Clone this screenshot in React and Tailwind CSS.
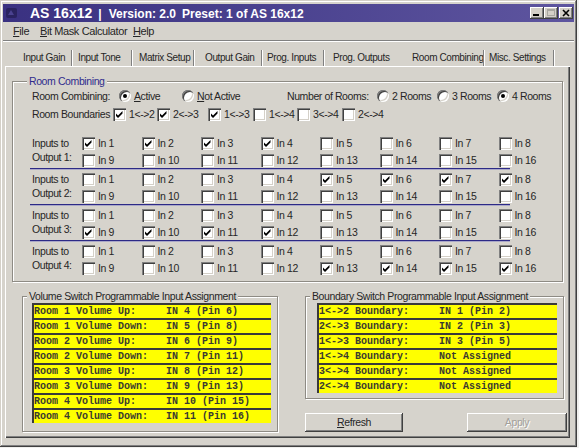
import React from 'react';

const UI_FONT = "font-['Liberation_Sans',Arial,sans-serif]";

function Check({ on }) {
  return (
    <span className="relative inline-block w-[13px] h-[13px] shrink-0 bg-white shadow-[inset_1px_1px_0_#808080,inset_2px_2px_0_#404040,inset_-1px_-1px_0_#ffffff,inset_-2px_-2px_0_#d4d0c8]">
      {on && (
        <svg width="13" height="13" viewBox="0 0 13 13" className="absolute left-0 top-0">
          <path d="M3 5.5 L5 7.5 L9.5 3 V5.5 L5 10 L3 8 Z" fill="#000" />
        </svg>
      )}
    </span>
  );
}

function Radio({ on }) {
  return (
    <span className="inline-flex items-center justify-center w-[12px] h-[12px] shrink-0 rounded-full bg-white shadow-[inset_1px_1px_0_#808080,inset_2px_2px_0_#404040,inset_-1px_-1px_0_#ffffff,inset_-2px_-2px_0_#d4d0c8]">
      {on && <span className="w-[4px] h-[4px] rounded-full bg-black" />}
    </span>
  );
}

function CheckItem({ on, children, className = '' }) {
  return (
    <div className={`flex items-center gap-[3px] ${className}`}>
      <Check on={on} />
      <span>{children}</span>
    </div>
  );
}

function RadioItem({ on, children, className = '' }) {
  return (
    <div className={`flex items-center gap-[3px] ${className}`}>
      <Radio on={on} />
      <span>{children}</span>
    </div>
  );
}

function Group({ title, className = '', titleClass = '', children }) {
  return (
    <div className={`relative border border-[#8e8b84] shadow-[inset_1px_1px_0_#ffffff,1px_1px_0_#ffffff] ${className}`}>
      <span className={`absolute left-[4px] -top-[7px] px-[2px] bg-[#d6d3cc] leading-[12px] ${titleClass}`}>
        {title}
      </span>
      {children}
    </div>
  );
}

function U({ children }) {
  return <span className="underline underline-offset-[1px]">{children}</span>;
}

const tabs = [
  { label: 'Input Gain', w: 'w-[48px]', gap: 'w-[5px]' },
  { label: 'Input Tone', w: 'w-[53px]', gap: 'w-[6px]' },
  { label: 'Matrix Setup', w: 'w-[54px]', gap: 'w-[10px]' },
  { label: 'Output Gain', w: 'w-[56px]', gap: 'w-[4px]' },
  { label: 'Prog. Inputs', w: 'w-[56px]', gap: 'w-[8px]' },
  { label: 'Prog. Outputs', w: 'w-[79px]', gap: null },
  { label: 'Room Combining', w: 'w-[71px]', gap: 'w-[4px]' },
  { label: 'Misc. Settings', w: 'w-[64px]', gap: 'w-0' },
];

const outputs = [
  { n: 1, on: [1, 2, 3, 4] },
  { n: 2, on: [5, 6, 7, 8] },
  { n: 3, on: [9, 10, 11, 12] },
  { n: 4, on: [13, 14, 15, 16] },
];

const volumeRows = [
  'Room 1 Volume Up:     IN 4 (Pin 6)',
  'Room 1 Volume Down:   IN 5 (Pin 8)',
  'Room 2 Volume Up:     IN 6 (Pin 9)',
  'Room 2 Volume Down:   IN 7 (Pin 11)',
  'Room 3 Volume Up:     IN 8 (Pin 12)',
  'Room 3 Volume Down:   IN 9 (Pin 13)',
  'Room 4 Volume Up:     IN 10 (Pin 15)',
  'Room 4 Volume Down:   IN 11 (Pin 16)',
];

const boundaryRows = [
  '1<->2 Boundary:     IN 1 (Pin 2)',
  '2<->3 Boundary:     IN 2 (Pin 3)',
  '1<->3 Boundary:     IN 3 (Pin 5)',
  '1<->4 Boundary:     Not Assigned',
  '3<->4 Boundary:     Not Assigned',
  '2<->4 Boundary:     Not Assigned',
];

function YellowRow({ text }) {
  return (
    <div className="h-[15px] bg-[#ffff00] border-t-2 border-l-2 border-[#3a3a3a] flex items-center font-['Liberation_Mono','Courier_New',monospace] text-[10px] tracking-normal font-bold text-[#3a3a30] whitespace-pre leading-[13px]">
      {text}
    </div>
  );
}

function TitleButton({ children, className = '' }) {
  return (
    <div className={`w-[14px] h-[12px] bg-[#d4d0c8] relative shadow-[inset_-1px_-1px_0_#404040,inset_1px_1px_0_#ffffff,inset_-2px_-2px_0_#808080] ${className}`}>
      {children}
    </div>
  );
}

function TitleBar() {
  return (
    <div className="mt-[1px] h-[18px] shrink-0 flex items-center bg-linear-to-r from-[#3a3181] to-[#5e559f] pl-[2px] pr-[1px]">
      <svg width="14" height="14" viewBox="0 0 14 14" className="shrink-0">
        <rect x="1" y="2" width="11" height="10" rx="2" fill="#2a2360" />
        <path d="M3 9 L6 4 L9 9 Z" fill="#4b4290" />
      </svg>
      <div className="ml-[11px] flex items-baseline text-white font-bold tracking-normal">
        <span className="text-[14px]">AS 16x12</span>
        <span className="text-[12px] ml-[6px]">|</span>
        <span className="text-[12px] ml-[7px]">Version: 2.0</span>
        <span className="text-[12px] ml-[6px]">Preset: 1 of AS 16x12</span>
      </div>
      <div className="ml-auto flex items-center">
        <TitleButton>
          <span className="absolute left-[3px] top-[7px] w-[6px] h-[2px] bg-black" />
        </TitleButton>
        <TitleButton>
          <span className="absolute left-[3px] top-[2px] w-[8px] h-[7px] border border-t-2 border-[#a8a6a0]" />
        </TitleButton>
        <TitleButton className="ml-[1px]">
          <svg width="14" height="12" viewBox="0 0 14 12" className="absolute left-0 top-0">
            <path d="M4 3 L10 9 M10 3 L4 9" stroke="#000" strokeWidth="1.6" />
          </svg>
        </TitleButton>
      </div>
    </div>
  );
}

function MenuBar() {
  return (
    <div className="h-[18px] shrink-0 flex items-center pl-[10px] text-[11px]">
      <span className="w-[27px]"><U>F</U>ile</span>
      <span className="w-[93px]"><U>B</U>it Mask Calculator</span>
      <span><U>H</U>elp</span>
    </div>
  );
}

function TabStrip() {
  return (
    <div className="mt-[8px] ml-[20px] h-[16px] shrink-0 flex items-stretch text-[10px]">
      {tabs.map((t) => (
        <React.Fragment key={t.label}>
          <div className={`${t.w} shrink-0 flex items-center`}>{t.label}</div>
          {t.gap !== null && (
            <>
              <div className="w-[2px] shrink-0 border-l border-[#808080] border-r border-r-white" />
              <div className={`${t.gap} shrink-0`} />
            </>
          )}
        </React.Fragment>
      ))}
    </div>
  );
}

function OutputBlock({ n, on, last }) {
  const cells = Array.from({ length: 16 }, (_, i) => i + 1);
  return (
    <div>
      <div className="flex">
        <div className="w-[50px] pt-[1px] leading-[14px]">
          Inputs to
          <br />
          Output {n}:
        </div>
        <div className="grid grid-cols-[repeat(8,59.5px)] grid-rows-[17px_16px]">
          {cells.map((c) => (
            <CheckItem key={c} on={on.includes(c)}>
              In {c}
            </CheckItem>
          ))}
        </div>
      </div>
      {!last && <div className="-ml-[2px] w-[480px] h-[2px] mb-[1px] border-t border-[#2d2a86] border-b border-b-[#aaa8c8]" />}
    </div>
  );
}

function RoomCombining() {
  return (
    <Group
      title="Room Combining"
      titleClass="left-[14px] text-[#2f2b8c]"
      className="ml-[5px] mt-[13px] w-[551px] pl-[19px] pt-[6px] pb-[5px]"
    >
      <div className="flex items-center h-[16px]">
        <span className="w-[87px] shrink-0">Room Combining:</span>
        <RadioItem on className="w-[63px] shrink-0"><U>A</U>ctive</RadioItem>
        <RadioItem className="w-[105px] shrink-0"><U>N</U>ot Active</RadioItem>
        <span className="w-[90px] shrink-0">Number of Rooms:</span>
        <RadioItem className="w-[60px] shrink-0">2 Rooms</RadioItem>
        <RadioItem className="w-[60px] shrink-0">3 Rooms</RadioItem>
        <RadioItem on>4 Rooms</RadioItem>
      </div>
      <div className="flex items-center h-[16px] mt-[2px]">
        <span className="w-[81px] shrink-0">Room Boundaries</span>
        <CheckItem on className="w-[44px] shrink-0">1&lt;-&gt;2</CheckItem>
        <CheckItem on className="w-[51px] shrink-0">2&lt;-&gt;3</CheckItem>
        <CheckItem on className="w-[45px] shrink-0">1&lt;-&gt;3</CheckItem>
        <CheckItem className="w-[44px] shrink-0">1&lt;-&gt;4</CheckItem>
        <CheckItem className="w-[45px] shrink-0">3&lt;-&gt;4</CheckItem>
        <CheckItem>2&lt;-&gt;4</CheckItem>
      </div>
      <div className="mt-[13px]">
        {outputs.map((o, i) => (
          <OutputBlock key={o.n} n={o.n} on={o.on} last={i === outputs.length - 1} />
        ))}
      </div>
    </Group>
  );
}

function Button({ children, disabled, className = '' }) {
  return (
    <div
      className={`h-[19px] flex items-center justify-center bg-[#d6d3cc] shadow-[inset_-1px_-1px_0_#404040,inset_1px_1px_0_#ffffff,inset_-2px_-2px_0_#808080] ${
        disabled ? 'text-[#a3a09a] [text-shadow:1px_1px_0_#ffffff]' : ''
      } ${className}`}
    >
      {children}
    </div>
  );
}

function Panel() {
  return (
    <div className="ml-[2px] w-[565px] h-[372px] shrink-0 p-[2px] shadow-[inset_1px_1px_0_#ffffff,inset_-1px_-1px_0_#404040,inset_-2px_-2px_0_#808080]">
      <RoomCombining />
      <div className="flex items-start mt-[14px] ml-[15px]">
        <Group
          title="Volume Switch Programmable Input Assignment"
          className="w-[256px] pl-[9px] pr-[6px] pt-[6px] pb-[8px]"
        >
          {volumeRows.map((r) => (
            <YellowRow key={r} text={r} />
          ))}
        </Group>
        <div className="ml-[27px] w-[262px]">
          <Group
            title="Boundary Switch Programmable Input Assignment"
            className="w-[259px] pl-[11px] pr-[6px] pt-[6px] pb-[5px]"
          >
            {boundaryRows.map((r) => (
              <YellowRow key={r} text={r} />
            ))}
          </Group>
          <div className="flex mt-[14px]">
            <Button className="w-[98px]"><U>R</U>efresh</Button>
            <Button disabled className="ml-[64px] w-[100px]">Apply</Button>
          </div>
        </div>
      </div>
    </div>
  );
}

export default function App() {
  return (
    <div className={`w-[579px] h-[448px] bg-[#f0f0ee] overflow-hidden whitespace-nowrap ${UI_FONT} text-[10.5px] tracking-[-0.4px] leading-none text-[#262626]`}>
      <div className="w-[577px] h-[447px] bg-[#d6d3cc] p-[3px] flex flex-col shadow-[inset_-1px_-1px_0_#404040,inset_1px_1px_0_#d4d0c8,inset_-2px_-2px_0_#808080,inset_2px_2px_0_#ffffff]">
        <TitleBar />
        <MenuBar />
        <div className="h-[2px] shrink-0 border-t border-[#808080] border-b border-b-white" />
        <TabStrip />
        <Panel />
      </div>
    </div>
  );
}
